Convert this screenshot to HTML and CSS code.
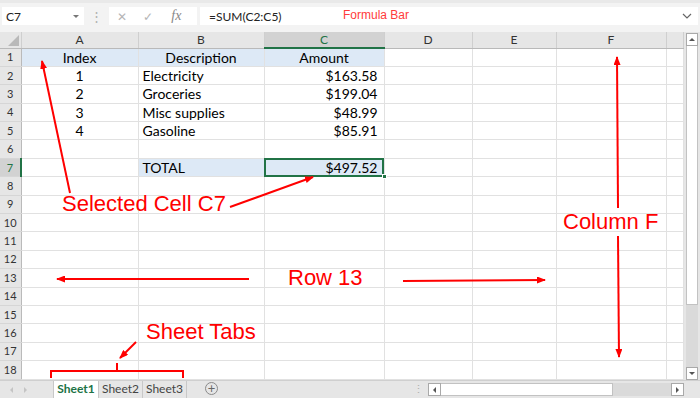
FILE: index.html
```html
<!DOCTYPE html>
<html lang="en">

<head>
    <meta charset="UTF-8" />
    <title>Excel - Book1</title>
    <link rel="stylesheet" href="styles.css">
</head>

<body>
    <div class="toolbar">
        <div class="name-box">
            <span>C7</span>
            <span class="caret"></span>
        </div>
        <div class="grip">&#8942;</div>
        <div class="fx-box">
            <span class="fx-btn cancel">&#10005;</span>
            <span class="fx-btn enter">&#10003;</span>
            <span class="fx-btn fx">fx</span>
        </div>
        <div class="formula">
            <span>=SUM(C2:C5)</span>
            <svg class="chevron" width="10" height="6" viewBox="0 0 10 6">
                <path d="M1 1 L5 5 L9 1" fill="none" stroke="#666" stroke-width="1.2" />
            </svg>
        </div>
    </div>

    <div class="main">
        <table class="grid">
            <colgroup>
                <col class="c-rh">
                <col class="c-a">
                <col class="c-b">
                <col class="c-c">
                <col class="c-d">
                <col class="c-e">
                <col class="c-f">
                <col class="c-g">
            </colgroup>
            <thead>
                <tr>
                    <th class="corner"><span class="tri"></span></th>
                    <th>A</th>
                    <th>B</th>
                    <th class="sel">C</th>
                    <th>D</th>
                    <th>E</th>
                    <th>F</th>
                    <th></th>
                </tr>
            </thead>
            <tbody id="rows">
                <tr>
                    <th>1</th>
                    <td class="fill center">Index</td>
                    <td class="fill center">Description</td>
                    <td class="fill center">Amount</td>
                    <td></td><td></td><td></td><td></td>
                </tr>
                <tr>
                    <th>2</th>
                    <td class="center">1</td>
                    <td>Electricity</td>
                    <td class="num">$163.58</td>
                    <td></td><td></td><td></td><td></td>
                </tr>
                <tr>
                    <th>3</th>
                    <td class="center">2</td>
                    <td>Groceries</td>
                    <td class="num">$199.04</td>
                    <td></td><td></td><td></td><td></td>
                </tr>
                <tr>
                    <th>4</th>
                    <td class="center">3</td>
                    <td>Misc supplies</td>
                    <td class="num">$48.99</td>
                    <td></td><td></td><td></td><td></td>
                </tr>
                <tr>
                    <th>5</th>
                    <td class="center">4</td>
                    <td>Gasoline</td>
                    <td class="num">$85.91</td>
                    <td></td><td></td><td></td><td></td>
                </tr>
                <tr>
                    <th>6</th>
                    <td></td><td></td><td></td><td></td><td></td><td></td><td></td>
                </tr>
                <tr>
                    <th class="sel">7</th>
                    <td></td>
                    <td class="fill">TOTAL</td>
                    <td class="fill num active">$497.52<span class="handle"></span></td>
                    <td></td><td></td><td></td><td></td>
                </tr>
                <!-- rows 8-18 are empty, filled by JS -->
            </tbody>
        </table>

        <div class="vscroll">
            <div class="sb-btn"><span class="arr up"></span></div>
            <div class="v-thumb"></div>
            <div class="v-track"></div>
            <div class="sb-btn"><span class="arr down"></span></div>
        </div>
    </div>

    <div class="tabbar">
        <div class="nav">
            <span class="arr left dim"></span>
            <span class="arr right dim"></span>
        </div>
        <div class="tabs">
            <div class="tab current">Sheet1</div>
            <div class="tab">Sheet2</div>
            <div class="tab">Sheet3</div>
        </div>
        <div class="add-sheet">+</div>
        <div class="grip small">&#8942;</div>
        <div class="hscroll">
            <div class="sb-btn"><span class="arr left"></span></div>
            <div class="h-thumb"></div>
            <div class="h-track"></div>
            <div class="sb-btn"><span class="arr right"></span></div>
        </div>
    </div>

    <!-- Annotations drawn over the sheet -->
    <svg class="notes" width="700" height="398" viewBox="0 0 700 398">
        <defs>
            <marker id="head" markerWidth="9" markerHeight="7" refX="8" refY="3.5" orient="auto"
                markerUnits="userSpaceOnUse">
                <path d="M0 0 L9 3.5 L0 7 Z" fill="#ff0000" />
            </marker>
        </defs>
        <g stroke="#ff0000" stroke-width="2" fill="none">
            <line x1="70" y1="193" x2="42" y2="61" marker-end="url(#head)" />
            <line x1="230" y1="207" x2="313" y2="177" marker-end="url(#head)" />
            <line x1="249" y1="279" x2="57" y2="279" marker-end="url(#head)" />
            <line x1="403" y1="281" x2="545" y2="280" marker-end="url(#head)" />
            <line x1="618" y1="208" x2="617" y2="57" marker-end="url(#head)" />
            <line x1="618" y1="236" x2="619" y2="357" marker-end="url(#head)" />
            <line x1="136" y1="342" x2="120" y2="358" marker-end="url(#head)" />
            <path d="M51 378 V371 H183 V378 M117 371 V363" />
        </g>
    </svg>
    <div class="label small-label" id="lblFormula">Formula Bar</div>
    <div class="label" id="lblCell">Selected Cell C7</div>
    <div class="label" id="lblColumn">Column F</div>
    <div class="label" id="lblRow">Row 13</div>
    <div class="label" id="lblTabs">Sheet Tabs</div>

    <script>
        const rows = document.getElementById("rows");
        for (let i = 8; i <= 18; i++) {
            const tr = document.createElement("tr");
            tr.innerHTML = `<th>${i}</th>` + "<td></td>".repeat(7);
            rows.appendChild(tr);
        }
    </script>
</body>

</html>
```

FILE: styles.css
```css
body {
    margin: 0;
    width: 700px;
    height: 398px;
    overflow: hidden;
    position: relative;
    background-color: #ffffff;
    font-family: Lato, "Open Sans", sans-serif;
    color: #000;
}

/* ---------- formula bar ---------- */
.toolbar {
    height: 32px;
    box-sizing: border-box;
    background-color: #f3f3f3;
    border-top: 3px solid #e9e9e9;
    display: flex;
    align-items: flex-start;
    padding-top: 4px;
}

.name-box {
    width: 82px;
    height: 18px;
    margin-left: 2px;
    background-color: #fff;
    display: flex;
    align-items: center;
    justify-content: space-between;
    padding: 0 5px 0 4px;
    box-sizing: border-box;
    font-size: 12px;
    color: #222;
}

.caret {
    width: 0;
    height: 0;
    border-left: 3px solid transparent;
    border-right: 3px solid transparent;
    border-top: 3px solid #777;
}

.grip {
    width: 25px;
    text-align: center;
    color: #b0b0b0;
    font-size: 13px;
    line-height: 18px;
}

.fx-box {
    width: 88px;
    height: 18px;
    background-color: #fff;
    display: flex;
    align-items: center;
    padding-left: 8px;
    box-sizing: border-box;
}

.fx-btn {
    color: #b5b5b5;
    font-size: 12px;
    width: 29px;
}

.fx-btn.fx {
    font-family: "Liberation Serif", serif;
    font-style: italic;
    font-size: 14px;
    color: #888;
    padding-left: 3px;
}

.formula {
    flex: 1;
    margin-left: 3px;
    margin-right: 2px;
    height: 18px;
    background-color: #fff;
    display: flex;
    align-items: center;
    justify-content: space-between;
    padding: 0 6px 0 9px;
    box-sizing: border-box;
    font-size: 12px;
    color: #222;
}

/* ---------- grid ---------- */
.main {
    display: flex;
    height: 348px;
    overflow: hidden;
}

.grid {
    width: 683px;
    height: 347px;
    table-layout: fixed;
    border-collapse: collapse;
    font-size: 14px;
}

.c-rh { width: 21px; }
.c-a { width: 117px; }
.c-b { width: 126px; }
.c-c { width: 120px; }
.c-d { width: 88px; }
.c-e { width: 84px; }
.c-f { width: 110px; }
.c-g { width: 17px; }

.grid thead tr {
    height: 16px;
}

.grid tbody tr {
    height: 18.4px;
}

.grid thead th {
    padding: 0;
    background-color: #e6e6e6;
    border-right: 1px solid #cfcfcf;
    border-bottom: 1px solid #b9b9b9;
    font-weight: normal;
    font-size: 12px;
    color: #333;
    line-height: 14px;
}

.grid thead th.sel {
    background-color: #d2d2d2;
    color: #217346;
    border-bottom: 2px solid #217346;
}

.corner {
    position: relative;
}

.tri {
    position: absolute;
    right: 2px;
    bottom: 2px;
    width: 0;
    height: 0;
    border-left: 11px solid transparent;
    border-bottom: 11px solid #b9b9b9;
}

.grid tbody th {
    padding: 0;
    background-color: #e6e6e6;
    border-right: 1px solid #bababa;
    border-bottom: 1px solid #d6d6d6;
    font-weight: normal;
    font-size: 11px;
    color: #333;
    line-height: 14px;
}

.grid tbody th.sel {
    background-color: #d2d2d2;
    color: #217346;
    border-right: 2px solid #217346;
}

.grid td {
    padding: 0 4px;
    border-right: 1px solid #e1e1e1;
    border-bottom: 1px solid #e1e1e1;
    white-space: nowrap;
    overflow: hidden;
    line-height: 15px;
}

.fill {
    background-color: #dde9f6;
}

.center {
    text-align: center;
}

.grid td.num {
    text-align: right;
    padding-right: 6px;
}

.grid td.active {
    position: relative;
    overflow: visible;
    outline: 2px solid #217346;
    outline-offset: -2px;
}

.handle {
    position: absolute;
    right: -3px;
    bottom: -3px;
    width: 5px;
    height: 5px;
    background-color: #217346;
    border: 1px solid #fff;
    box-sizing: border-box;
}

/* ---------- scrollbars ---------- */
.vscroll {
    width: 17px;
    background-color: #e6e6e6;
    display: flex;
    flex-direction: column;
    padding: 1px 3px 0 2px;
    box-sizing: border-box;
}

.sb-btn {
    width: 12px;
    height: 13px;
    background-color: #fff;
    border: 1px solid #a9a9a9;
    box-sizing: border-box;
    display: flex;
    align-items: center;
    justify-content: center;
    flex: none;
}

.v-thumb {
    height: 258px;
    background-color: #fff;
    border: 1px solid #c2c2c2;
    border-top: none;
}

.v-track {
    flex: 1;
    background-color: #dadada;
}

.arr {
    width: 0;
    height: 0;
    border: 3px solid transparent;
}

.arr.up { border-bottom-color: #555; border-top-width: 0; }
.arr.down { border-top-color: #555; border-bottom-width: 0; }
.arr.left { border-right-color: #555; border-left-width: 0; }
.arr.right { border-left-color: #555; border-right-width: 0; }
.arr.dim.left { border-right-color: #c4c4c4; }
.arr.dim.right { border-left-color: #c4c4c4; }

/* ---------- sheet tabs ---------- */
.tabbar {
    height: 18px;
    background-color: #e6e6e6;
    border-top: 1px solid #cfcfcf;
    box-sizing: border-box;
    display: flex;
    align-items: stretch;
    font-size: 12px;
}

.nav {
    width: 53px;
    display: flex;
    align-items: center;
    gap: 11px;
    padding-left: 10px;
    box-sizing: border-box;
}

.tabs {
    display: flex;
}

.tab {
    width: 43px;
    text-align: center;
    color: #444;
    border-right: 1px solid #c8c8c8;
    line-height: 16px;
}

.tab.current {
    width: 44px;
    background-color: #fff;
    color: #217346;
    font-weight: bold;
    border-left: 1px solid #c8c8c8;
}

.add-sheet {
    width: 13px;
    height: 13px;
    margin: 1px 0 0 18px;
    border: 1px solid #8a8a8a;
    border-radius: 50%;
    box-sizing: border-box;
    text-align: center;
    line-height: 11px;
    font-size: 13px;
    color: #666;
}

.grip.small {
    width: 20px;
    margin-left: 190px;
    font-size: 11px;
    line-height: 16px;
}

.hscroll {
    display: flex;
    align-items: center;
    margin-left: 0;
}

.hscroll .sb-btn {
    width: 13px;
    height: 13px;
}

.h-thumb {
    width: 172px;
    height: 13px;
    background-color: #fff;
    border: 1px solid #c2c2c2;
    border-left: none;
    box-sizing: border-box;
}

.h-track {
    width: 58px;
    height: 13px;
    background-color: #dadada;
}

/* ---------- annotations ---------- */
.notes {
    position: absolute;
    top: 0;
    left: 0;
    pointer-events: none;
}

.label {
    position: absolute;
    font-family: "Liberation Sans", Arial, sans-serif;
    font-size: 22px;
    line-height: 1;
    color: #ff0000;
    white-space: nowrap;
}

.small-label {
    font-size: 12px;
    color: #ff3b3b;
}

#lblFormula { left: 343px; top: 9px; }
#lblCell { left: 62px; top: 193px; }
#lblColumn { left: 563px; top: 211px; }
#lblRow { left: 288px; top: 267px; }
#lblTabs { left: 146px; top: 321px; }
```
